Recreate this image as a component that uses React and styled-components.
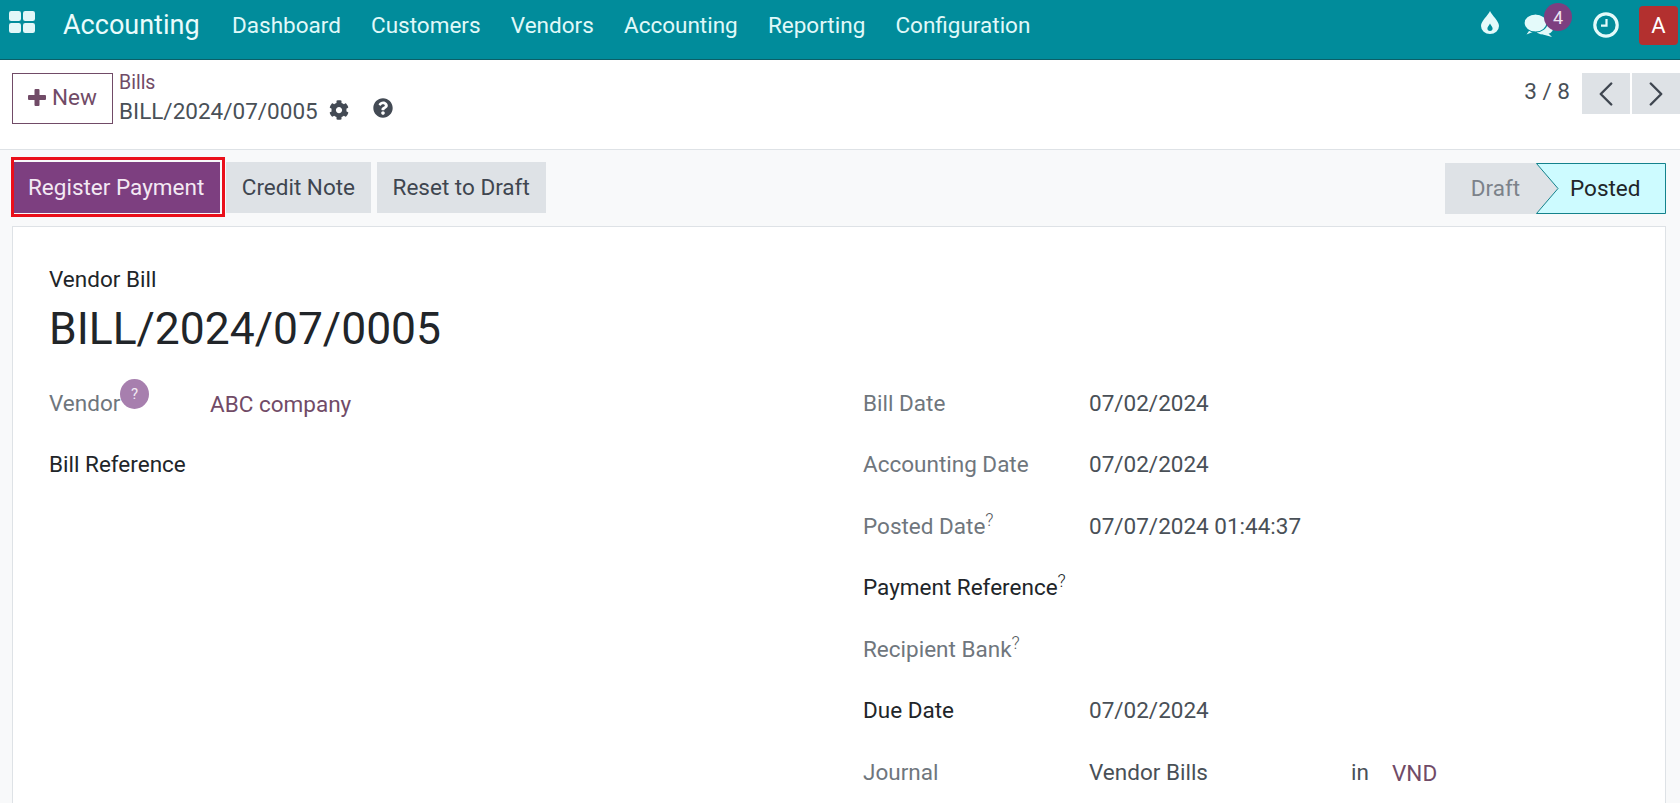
import React from "react";
import styled, { createGlobalStyle } from "styled-components";
import { FaCog, FaQuestionCircle } from "react-icons/fa";
import { FiChevronLeft, FiChevronRight } from "react-icons/fi";

const GlobalStyle = createGlobalStyle`
  html, body {
    margin: 0;
    height: 100%;
    overflow: hidden;
    background: #f8f9fa;
    font-family: Roboto, "Liberation Sans", sans-serif;
    color: #495057;
  }
  * { box-sizing: border-box; }
`;

const Page = styled.div`
  height: 803px;
  display: flex;
  flex-direction: column;
  overflow: hidden;
`;

const Navbar = styled.header`
  height: 60px;
  flex: none;
  display: flex;
  align-items: center;
  background: #018c9b;
  border-bottom: 1px solid #0b5f68;
  color: #e6fbfc;
  padding: 0 2px 9px 9px;
`;

const AppsGrid = styled.svg`
  width: 26px;
  height: 22px;
  margin-top: -6px;
`;

const AppName = styled.span`
  font-size: 27px;
  margin-left: 28px;
  margin-right: 32.5px;
  color: #eafcfc;
`;

const NavItem = styled.a`
  font-size: 22.5px;
  margin-right: 30.2px;
  color: #e0f9f9;
`;

const NavRight = styled.div`
  margin-left: auto;
  display: flex;
  align-items: center;
`;

const NavIcon = styled.span`
  display: flex;
  position: relative;
  margin-right: ${(p) => p.$gap}px;
  margin-top: ${(p) => p.$top || 0}px;
  color: #e4fafa;
`;

const Badge = styled.span`
  position: absolute;
  top: -11px;
  left: 20px;
  width: 28px;
  height: 28px;
  border-radius: 50%;
  background: #7d3f80;
  color: #efe3f0;
  font-size: 18px;
  display: flex;
  align-items: center;
  justify-content: center;
`;

const Avatar = styled.span`
  width: 39px;
  height: 39px;
  border-radius: 4px;
  background: #b3302f;
  color: #fff;
  font-size: 22px;
  display: flex;
  align-items: center;
  justify-content: center;
`;

const ControlPanel = styled.div`
  height: 90px;
  flex: none;
  background: #fff;
  border-bottom: 1px solid #dee2e6;
  display: flex;
  padding: 13px 0 0 12px;
`;

const NewButton = styled.button`
  width: 101px;
  height: 51px;
  background: #fff;
  border: 1px solid #714b67;
  color: #714b67;
  font: inherit;
  font-size: 22.5px;
  display: flex;
  align-items: center;
  justify-content: center;
  gap: 6px;
  padding: 0 0 3px;
`;

const Breadcrumb = styled.div`
  margin-left: 6px;
  margin-top: -1px;
  display: flex;
  flex-direction: column;
`;

const BreadLink = styled.a`
  font-size: 19.5px;
  line-height: 22px;
  color: #714b67;
`;

const BreadTitle = styled.div`
  display: flex;
  align-items: center;
  font-size: 22.5px;
  line-height: 30px;
  margin-top: 2px;
  color: #495057;
`;

const TitleIcon = styled.span`
  display: flex;
  font-size: 20px;
  margin-left: ${(p) => p.$gap}px;
  margin-top: ${(p) => p.$top || 0}px;
  color: #434a54;
`;

const Pager = styled.div`
  margin-left: auto;
  display: flex;
  align-items: flex-start;
  gap: 2px;
`;

const PagerText = styled.span`
  font-size: 22.5px;
  line-height: 36px;
  margin-right: 10px;
`;

const PagerButton = styled.button`
  width: 48px;
  height: 41px;
  border: 0;
  padding: 0;
  background: #dee2e6;
  color: #3f4650;
  font-size: 42px;
  display: flex;
  align-items: center;
  justify-content: center;
`;

const StatusRow = styled.div`
  height: 76px;
  flex: none;
  display: flex;
  align-items: flex-start;
  padding: 12px 14px 0 12px;
  gap: 5.5px;
`;

const ActionButton = styled.button`
  position: relative;
  height: 51px;
  border: 0;
  padding: 0 16px 2px;
  font: inherit;
  font-size: 22.5px;
  background: ${(p) => (p.$primary ? "#7d3f80" : "#dee2e6")};
  color: ${(p) => (p.$primary ? "#f3e9f3" : "#3f4650")};
`;

/* red marker drawn over the screenshot's main button */
const Highlight = styled.span`
  position: absolute;
  top: -5px;
  left: -1px;
  right: -5px;
  bottom: -4px;
  border: 3px solid #ea0f1a;
`;

const Status = styled.div`
  margin-left: auto;
  margin-top: 1px;
  height: 51px;
  width: 221px;
  display: flex;
  background: #dee2e6;
  font-size: 22.5px;
`;

const Draft = styled.span`
  width: 91px;
  line-height: 50px;
  text-align: center;
  padding-left: 10px;
  color: #7c828a;
`;

const Posted = styled.span`
  position: relative;
  flex: 1;
  line-height: 50px;
  color: #212529;
  padding-left: 34px;
`;

const PostedShape = styled.svg`
  position: absolute;
  top: 0;
  left: 0;
  width: 100%;
  height: 100%;
`;

const PostedLabel = styled.span`
  position: relative;
`;

const Sheet = styled.main`
  flex: 1;
  margin: 0 14px 0 12px;
  background: #fff;
  border: 1px solid #dee2e6;
  padding: 40px 36px 0;
`;

const Kind = styled.div`
  font-size: 22.5px;
  line-height: 24px;
  color: #212529;
`;

const Title = styled.h1`
  margin: 9px 0 29.5px;
  font-size: 44.4px;
  line-height: 58px;
  font-weight: 400;
  color: #212529;
`;

const FormColumns = styled.div`
  display: grid;
  grid-template-columns: 814px 1fr;
`;

const Fields = styled.div`
  display: grid;
  grid-template-columns: ${(p) => p.$label}px 1fr;
  grid-auto-rows: 61.5px;
  align-items: start;
  font-size: 22.5px;
  line-height: 30px;
`;

const Label = styled.div`
  position: relative;
  color: ${(p) => (p.$strong ? "#212529" : "#6f767d")};
`;

const Tip = styled.sup`
  font-size: 18px;
  font-weight: 300;
  line-height: 0;
  vertical-align: 8px;
  color: ${(p) => (p.$strong ? "#212529" : "#555a60")};
`;

const HelpDot = styled.span`
  position: absolute;
  left: 71px;
  top: -9px;
  width: 29px;
  height: 30px;
  padding-top: 1px;
  border-radius: 50%;
  background: #a77fae;
  color: #f3ebf4;
  font-size: 15px;
  display: flex;
  align-items: center;
  justify-content: center;
`;

const Value = styled.div`
  color: #495057;
`;

const LinkValue = styled.a`
  display: block;
  margin-top: 1px;
  color: #714b67;
`;

const JournalValue = styled.div`
  display: grid;
  grid-template-columns: 262px 41px 1fr;
  color: #495057;
`;

const rows = [
  { label: "Bill Date", value: "07/02/2024" },
  { label: "Accounting Date", value: "07/02/2024" },
  { label: "Posted Date", tip: true, value: "07/07/2024 01:44:37" },
  { label: "Payment Reference", tip: true, strong: true },
  { label: "Recipient Bank", tip: true },
  { label: "Due Date", strong: true, value: "07/02/2024" },
];

const menu = ["Dashboard", "Customers", "Vendors", "Accounting", "Reporting", "Configuration"];

const App = () => {
  return (
    <Page>
      <GlobalStyle />
      <Navbar>
        <AppsGrid viewBox="0 0 26 22" fill="#e2f7f8">
          <rect x="0" y="0" width="12" height="10" rx="2.2" />
          <rect x="14" y="0" width="12" height="10" rx="2.2" />
          <rect x="0" y="12" width="12" height="10" rx="2.2" />
          <rect x="14" y="12" width="12" height="10" rx="2.2" />
        </AppsGrid>
        <AppName>Accounting</AppName>
        {menu.map((item) => (
          <NavItem key={item}>{item}</NavItem>
        ))}
        <NavRight>
          <NavIcon $gap={25} $top={-5}>
            <svg width="18" height="23" viewBox="0 0 18 23" fill="currentColor">
              <path
                fillRule="evenodd"
                d="M9 0C11 4.5 18 10 18 15a9 8 0 0 1-18 0C0 10 7 4.5 9 0ZM9 12.5c-.7 1.8-2.6 3.2-2.6 4.8a2.6 2.6 0 0 0 5.2 0c0-1.6-1.9-3-2.6-4.8Z"
              />
            </svg>
          </NavIcon>
          <NavIcon $gap={40} $top={1}>
            <svg width="29" height="23" viewBox="0 0 29 23" fill="currentColor">
              <ellipse cx="20" cy="15" rx="9" ry="5.5" />
              <path d="M23 18l5 5-9-2.5Z" />
              <path d="M6 15.5L2.5 20.5 10 17.5Z" />
              <ellipse cx="11.5" cy="9" rx="11.5" ry="9" stroke="#018c9b" strokeWidth="1.2" />
            </svg>
            <Badge>4</Badge>
          </NavIcon>
          <NavIcon $gap={20} $top={-1}>
            <svg width="26" height="26" viewBox="0 0 26 26" fill="none" stroke="currentColor">
              <circle cx="13" cy="13" r="11.2" strokeWidth="3.2" />
              <path d="M13.5 7v6.7H8" strokeWidth="2.2" />
            </svg>
          </NavIcon>
          <Avatar>A</Avatar>
        </NavRight>
      </Navbar>

      <ControlPanel>
        <NewButton>
          <svg width="18" height="17" viewBox="0 0 18 17" fill="currentColor">
            <path d="M6.5 1a1 1 0 0 1 1-1h3a1 1 0 0 1 1 1v5h5.500a1 1 0 0 1 1 1v3a1 1 0 0 1-1 1h-5.500v5a1 1 0 0 1-1 1h-3a1 1 0 0 1-1-1v-5H1a1 1 0 0 1-1-1V7a1 1 0 0 1 1-1h5.500Z" />
          </svg>
          New
        </NewButton>
        <Breadcrumb>
          <BreadLink>Bills</BreadLink>
          <BreadTitle>
            BILL/2024/07/0005
            <TitleIcon $gap={11} $top={-3}>
              <FaCog />
            </TitleIcon>
            <TitleIcon $gap={24} $top={-7}>
              <FaQuestionCircle />
            </TitleIcon>
          </BreadTitle>
        </Breadcrumb>
        <Pager>
          <PagerText>3 / 8</PagerText>
          <PagerButton>
            <FiChevronLeft strokeWidth={1.4} />
          </PagerButton>
          <PagerButton>
            <FiChevronRight strokeWidth={1.4} />
          </PagerButton>
        </Pager>
      </ControlPanel>

      <StatusRow>
        <ActionButton $primary>
          Register Payment
          <Highlight />
        </ActionButton>
        <ActionButton>Credit Note</ActionButton>
        <ActionButton>Reset to Draft</ActionButton>
        <Status>
          <Draft>Draft</Draft>
          <Posted>
            <PostedShape viewBox="0 0 130 51" preserveAspectRatio="none">
              <polygon points="0.5,0.5 129.5,0.5 129.5,50.5 0.5,50.5 22,25.5" fill="#cdfbff" stroke="#14828c" strokeWidth="1" />
            </PostedShape>
            <PostedLabel>Posted</PostedLabel>
          </Posted>
        </Status>
      </StatusRow>

      <Sheet>
        <Kind>Vendor Bill</Kind>
        <Title>BILL/2024/07/0005</Title>
        <FormColumns>
          <Fields $label={161}>
            <Label>
              Vendor
              <HelpDot>?</HelpDot>
            </Label>
            <LinkValue>ABC company</LinkValue>
            <Label $strong>Bill Reference</Label>
            <Value />
          </Fields>
          <Fields $label={226}>
            {rows.map((row) => (
              <React.Fragment key={row.label}>
                <Label $strong={row.strong}>
                  {row.label}
                  {row.tip && <Tip $strong={row.strong}>?</Tip>}
                </Label>
                <Value>{row.value}</Value>
              </React.Fragment>
            ))}
            <Label>Journal</Label>
            <JournalValue>
              <span>Vendor Bills</span>
              <span>in</span>
              <LinkValue>VND</LinkValue>
            </JournalValue>
          </Fields>
        </FormColumns>
      </Sheet>
    </Page>
  );
};

export default App;
